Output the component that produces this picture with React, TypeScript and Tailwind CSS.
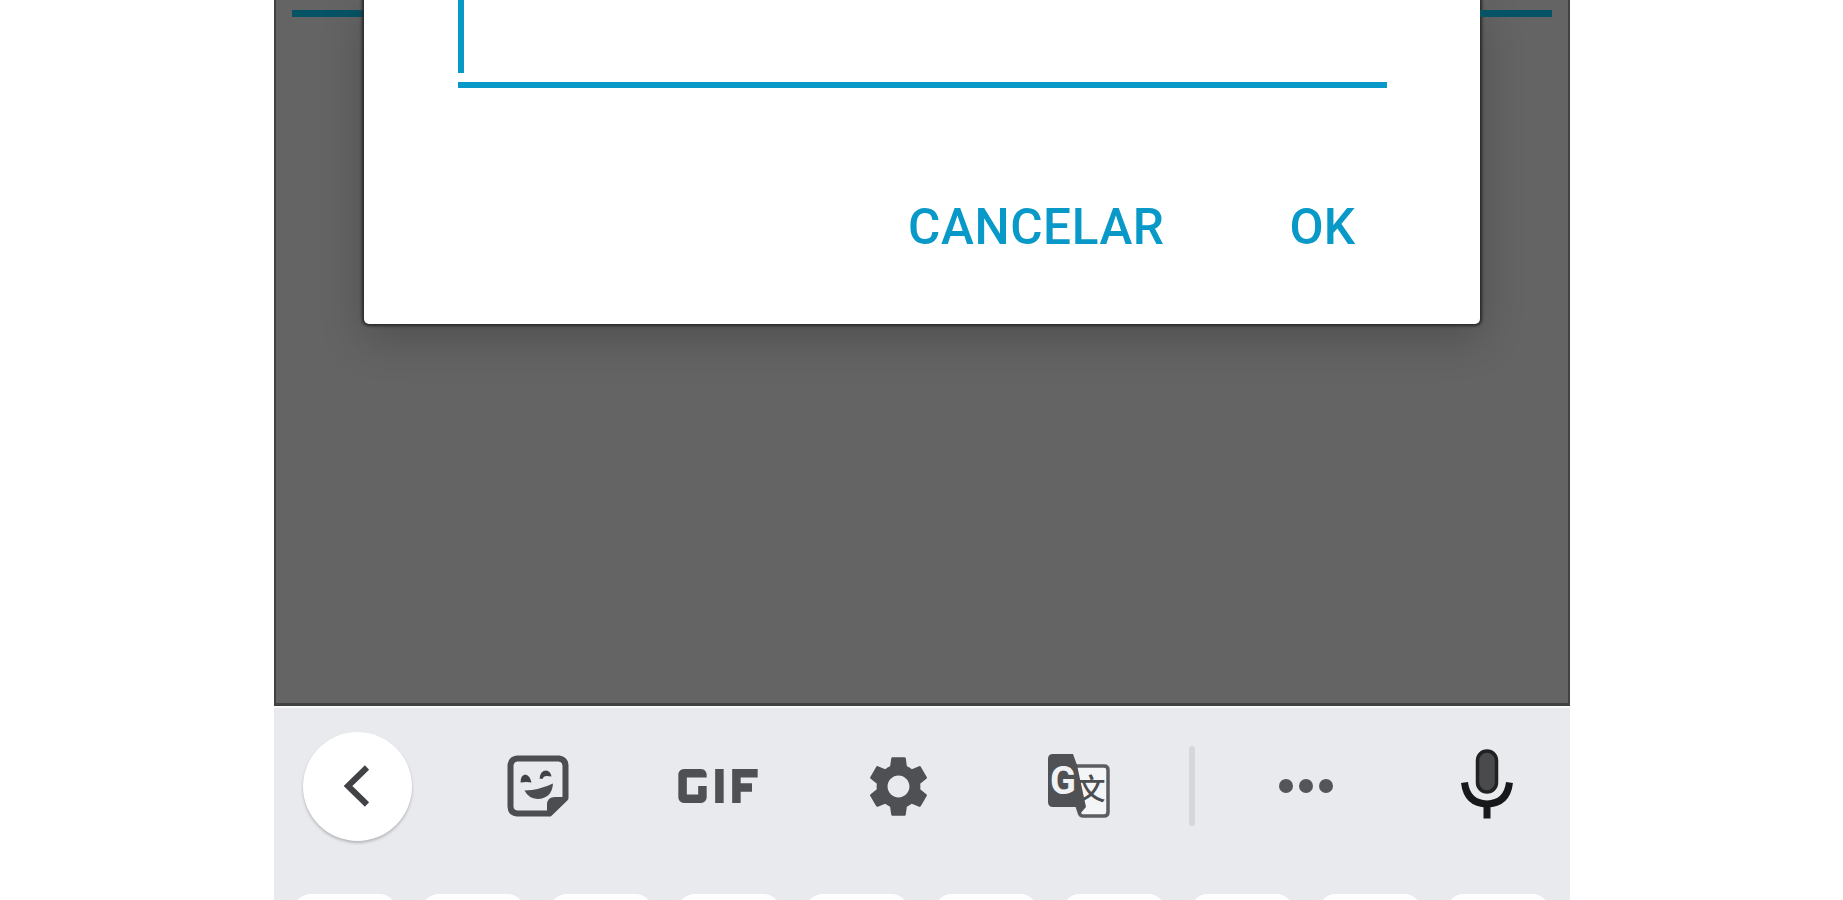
import type { ReactNode } from "react";
import { MdGif, MdSettings } from "react-icons/md";

const keys = ["q", "w", "e", "r", "t", "y", "u", "i", "o", "p"];

function Slot({ children }: { children: ReactNode }) {
  return <div className="flex items-center justify-center">{children}</div>;
}

function StickerIcon() {
  return (
    <svg className="h-[62px] w-[62px]" viewBox="0 0 62 62" fill="none">
      <path
        d="M10 3.500h42q6.500 1 6.500 7.500v32L42.500 58.500H10q-6.500-1-6.500-7V10q1-6 6.500-6.500z"
        stroke="#4c4d50"
        strokeWidth="6"
        strokeLinejoin="round"
      />
      <path d="M40 60V50q0-8 8-8h12v2L44 60z" fill="#4c4d50" />
      <path d="M13.500 27.500q0-7.500 5-8 4.500 1 6 8l-5-.500z" fill="#414245" />
      <path d="M32.500 23.500q1-8 6.500-8 4.500.500 5.500 6l-5-.500q-3 0-4 3z" fill="#414245" />
      <path d="M17.500 35.500q15-.500 28.500-7-1 15-15.500 15.500-9-.500-13-8.500z" fill="#4c4d50" />
    </svg>
  );
}

function TranslateIcon() {
  return (
    <svg className="h-[66px] w-[64px]" viewBox="0 0 64 66">
      <path
        d="M28 13h29q4 0 4 4v42q0 4-4 4H36q-3 0-4-4l-2-6"
        fill="#f4f5f7"
        stroke="#5c5d60"
        strokeWidth="3.5"
      />
      <text x="29.500" y="46.500" className="font-['Noto_Sans_CJK_SC',sans-serif] text-[29px] font-medium" fill="#4c4d50">
        文
      </text>
      <path d="M6 1h20l4 11 9 42-7 8-2-8H6q-5 0-5-5V6q0-5 5-5z" fill="#505154" />
      <text x="3" y="40.500" className="font-['Roboto',sans-serif] text-[38px] font-bold" fill="#f1f2f4">
        G
      </text>
    </svg>
  );
}

function MicIcon() {
  return (
    <svg className="h-[72px] w-[54px]" viewBox="0 0 54 72" fill="none">
      <rect x="17.500" y="3" width="19" height="41" rx="9.500" fill="#4a4a4c" stroke="#202123" strokeWidth="3.500" />
      <path d="M4.500 34.500q2.500 21 22.500 21.500 20-.500 22.500-21.500M27 56v14.500" stroke="#17181a" strokeWidth="7" />
    </svg>
  );
}

function Dialog() {
  return (
    <div className="h-[324px] w-[1116px] shrink-0 rounded-b-[5px] bg-white shadow-[0_0_3px_2px_#292929,0_14px_44px_rgba(0,0,0,0.22)]">
      <div className="ml-[94px] h-[73px] w-[6px] bg-[#0999c8]" />
      <div className="mt-[9px] ml-[94px] h-[6px] w-[929px] bg-[#0999c8]" />
      <div className="mt-[107px] mr-[125px] flex justify-end gap-[125px] font-['Roboto',sans-serif] text-[49.5px] leading-[64px] font-medium text-[#0999c8]">
        <button className="tracking-[0.6px]">CANCELAR</button>
        <button>OK</button>
      </div>
    </div>
  );
}

function Toolbar() {
  return (
    <div className="flex h-[156px] items-center">
      <div className="-ml-[7px] grid w-[902px] grid-cols-5 text-[#4f5053]">
        <Slot>
          <div className="flex size-[109px] items-center justify-center rounded-full bg-white shadow-[0_2px_3px_rgba(0,0,0,0.22)]">
            <svg className="h-[44px] w-[30px]" viewBox="0 0 30 44" fill="none">
              <path d="M25 3.500L6 22l19 18.500" stroke="#414245" strokeWidth="6" />
            </svg>
          </div>
        </Slot>
        <Slot>
          <StickerIcon />
        </Slot>
        <Slot>
          <MdGif className="size-[136px] shrink-0 -my-10" />
        </Slot>
        <Slot>
          <MdSettings className="size-[73px]" />
        </Slot>
        <Slot>
          <TranslateIcon />
        </Slot>
      </div>
      <div className="ml-[20px] h-[80px] w-[6px] rounded-full bg-[#d5d7da]" />
      <div className="ml-[84px] flex gap-[6px]">
        <span className="size-[14px] rounded-full bg-[#545558]" />
        <span className="size-[14px] rounded-full bg-[#545558]" />
        <span className="size-[14px] rounded-full bg-[#545558]" />
      </div>
      <div className="ml-[127px] -mt-[4px]">
        <MicIcon />
      </div>
    </div>
  );
}

export default function App() {
  return (
    <div className="flex h-[900px] justify-center overflow-hidden bg-white pl-px">
      <div className="flex w-[1296px] flex-col">
        <div className="flex h-[706px] items-start justify-between overflow-hidden border-x-2 border-b-3 border-[#414141] bg-[#646464]">
          <div className="mt-[10px] ml-[16px] h-[7px] flex-1 bg-[#075366]" />
          <Dialog />
          <div className="mt-[10px] mr-[16px] h-[7px] flex-1 bg-[#075366]" />
        </div>
        <div className="flex-1 border-t-2 border-[#fafafa] bg-[#e8eaed]">
          <Toolbar />
          <div className="mt-[30px] flex h-[6px] justify-between overflow-hidden pr-[20px] pl-[19px]">
            {keys.map((key) => (
              <div key={key} className="h-[120px] w-[104px] rounded-[18px] bg-white" />
            ))}
          </div>
        </div>
      </div>
    </div>
  );
}
